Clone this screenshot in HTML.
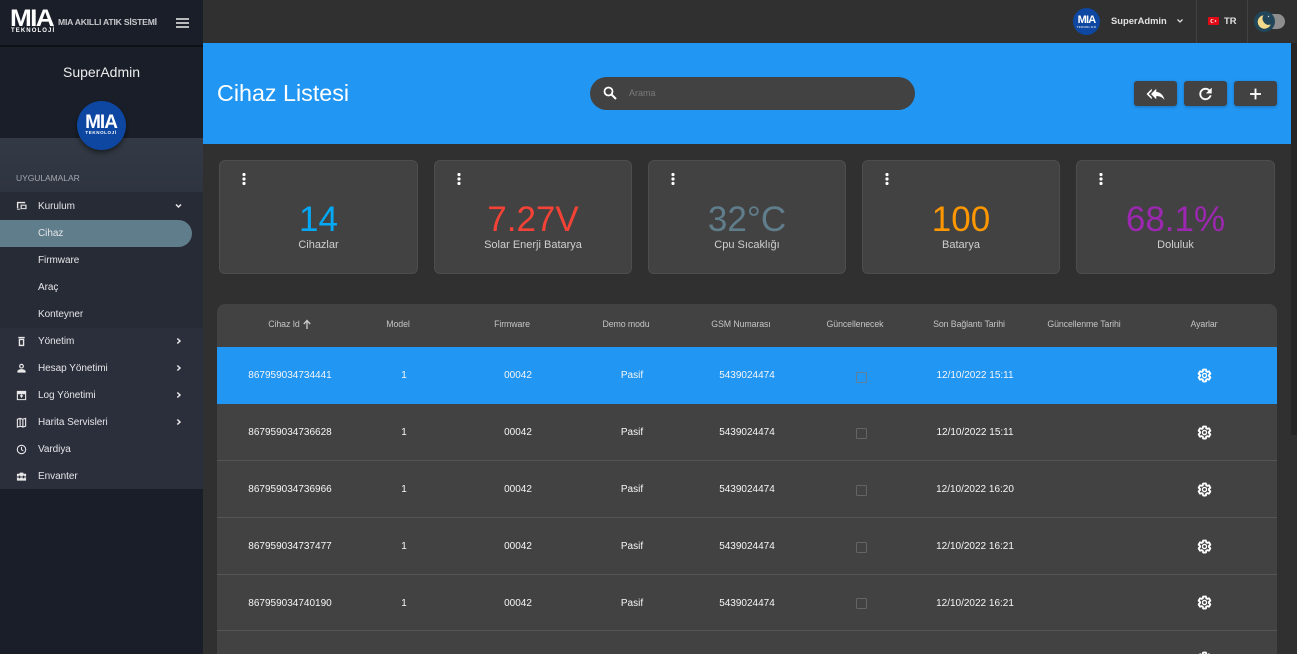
<!DOCTYPE html>
<html lang="tr"><head><meta charset="utf-8"><title>Cihaz Listesi</title>
<style>
*{box-sizing:border-box}
html,body{margin:0;padding:0;width:1297px;height:654px;overflow:hidden;background:#303030;font-family:"Liberation Sans",sans-serif;color:#fff}
#root{position:relative;width:1297px;height:654px;overflow:hidden}
.a{position:absolute;white-space:nowrap}
.c{transform:translateX(-50%)}
#side{position:absolute;left:0;top:0;width:203px;height:654px;background:#191e28;overflow:hidden}
#mid{position:absolute;left:0;top:138px;width:203px;height:351px;background:linear-gradient(#333a45,#2b2f3b 30%,#2b2e3b)}
.m{position:absolute;left:38px;font-size:10px;color:#e4e5e8;letter-spacing:-.05px;line-height:14px}
.ic{position:absolute;left:16px;width:11px;height:11px}
.ch{position:absolute;left:175px;width:7px;height:8px}
.card{position:absolute;top:160px;width:199px;height:114px;background:#424242;border:1px solid #4d4d4d;border-radius:6px}
.dots{position:absolute;left:22px;top:12px;width:4px;height:12px}
.num{position:absolute;left:0;right:0;top:41px;text-align:center;font-size:35px;line-height:36px;font-weight:400}
.lbl{position:absolute;left:0;right:0;top:77px;text-align:center;font-size:11px;color:#cfcfcf;line-height:14px}
.btn{position:absolute;top:81px;width:43px;height:25px;background:#424242;border-radius:3px;box-shadow:0 1px 3px rgba(0,0,0,.25)}
.btn svg{position:absolute;left:12px;top:3.5px;width:19px;height:18px}
.th{position:absolute;top:318px;font-size:8.8px;color:#c4c4c4;transform:translateX(-50%);white-space:nowrap;line-height:12px;letter-spacing:-.1px}
.td{position:absolute;font-size:10px;color:#f6f6f6;transform:translateX(-50%);white-space:nowrap;line-height:14px}
.cb{position:absolute;left:856px;width:11px;height:11px;border:1.5px solid #646464;border-radius:1.5px}
.gear{position:absolute;left:1196.5px;width:15px;height:15px}
.line{position:absolute;left:217px;width:1060px;height:1px;background:#555}
</style></head><body>
<div id="root">
<svg width="0" height="0" style="position:absolute"><defs>
<symbol id="g" viewBox="0 0 24 24"><path d="M19.14 12.94c.04-.3.06-.61.06-.94 0-.32-.02-.64-.07-.94l2.03-1.58a.49.49 0 0 0 .12-.61l-1.92-3.32a.488.488 0 0 0-.59-.22l-2.39.96c-.5-.38-1.03-.7-1.62-.94l-.36-2.54a.484.484 0 0 0-.48-.41h-3.84c-.24 0-.43.17-.47.41l-.36 2.54c-.59.24-1.13.57-1.62.94l-2.39-.96c-.22-.08-.47 0-.59.22L2.74 8.87c-.12.21-.08.47.12.61l2.03 1.58c-.05.3-.09.63-.09.94s.02.64.07.94l-2.03 1.58a.49.49 0 0 0-.12.61l1.92 3.32c.12.22.37.29.59.22l2.39-.96c.5.38 1.03.7 1.62.94l.36 2.54c.05.24.24.41.48.41h3.84c.24 0 .44-.17.47-.41l.36-2.54c.59-.24 1.13-.56 1.62-.94l2.39.96c.22.08.47 0 .59-.22l1.92-3.32c.12-.22.07-.47-.12-.61l-2.01-1.58z" fill="none" stroke="#fff" stroke-width="3" stroke-linejoin="round"/><circle cx="12" cy="12" r="3.300" fill="none" stroke="#fff" stroke-width="2.200"/></symbol>
</defs></svg>

<div id="side">
  <div style="position:absolute;left:0;top:45px;width:203px;height:2px;background:#0d1016"></div>
  <div class="a" style="left:10px;top:6px;font-size:24px;font-weight:700;letter-spacing:-1.5px;line-height:26px;transform:scaleX(1.09);transform-origin:left">MIA</div>
  <div class="a" style="left:11px;top:28px;font-size:6px;font-weight:700;letter-spacing:1.1px;line-height:7px">TEKNOLOJİ</div>
  <div class="a" style="left:58px;top:16px;font-size:8.6px;font-weight:700;color:#c8c9cc;letter-spacing:-.2px;line-height:12px">MIA AKILLI ATIK SİSTEMİ</div>
  <div style="position:absolute;left:176px;top:18px;width:13px;height:2px;background:#b9babc;box-shadow:0 4px 0 #b9babc,0 8px 0 #b9babc"></div>
  <div class="a c" style="left:101.500px;top:64px;font-size:14px;color:#eceded;line-height:17px">SuperAdmin</div>
  <div id="mid"></div>
  <div style="position:absolute;left:77px;top:101px;width:49px;height:49px;border-radius:50%;background:#0d47a1;box-shadow:0 3px 5px rgba(0,0,0,.45)"></div>
  <div class="a c" style="left:101px;top:113.500px;font-size:19px;font-weight:700;letter-spacing:-1px;line-height:17px">MIA</div>
  <div class="a c" style="left:101px;top:130px;font-size:4.500px;font-weight:700;letter-spacing:.6px;line-height:5px">TEKNOLOJİ</div>

  <div class="a" style="left:16px;top:172px;font-size:8.500px;color:#a3a7ae;line-height:12px;letter-spacing:-.05px">UYGULAMALAR</div>
  <div style="position:absolute;left:0;top:192px;width:203px;height:136px;background:#272b36"></div>
  <div style="position:absolute;left:0;top:220px;width:192px;height:27px;background:#607d8b;border-radius:0 14px 14px 0"></div>

  <svg class="ic" style="top:200px" viewBox="0 0 12 12"><path d="M1 2h9v1.500H2.500V9H1zM5 5h6.500v5H5z M1 9.500h3.500v1H1z" fill="#e8e8e8"/><rect x="6.300" y="6.200" width="3.900" height="2.700" fill="#2b303b"/></svg>
  <div class="m" style="top:200px">Kurulum</div>
  <svg class="ch" style="top:202px" viewBox="0 0 7 8"><path d="M1 2.500l2.500 2.500L6 2.500" fill="none" stroke="#e8e8e8" stroke-width="1.500"/></svg>
  <div class="m" style="top:227px">Cihaz</div>
  <div class="m" style="top:254px">Firmware</div>
  <div class="m" style="top:281px">Araç</div>
  <div class="m" style="top:308px">Konteyner</div>

  <svg class="ic" style="top:336px" viewBox="0 0 12 12"><path d="M2.500 1h7v1.500h-7zM3 3h6v8H3z" fill="#e8e8e8"/><rect x="4.500" y="4.500" width="3" height="5" fill="#2b2e3b"/></svg>
  <div class="m" style="top:335px">Yönetim</div>
  <svg class="ch" style="top:337px" viewBox="0 0 7 8"><path d="M2.300 1.500L5 4 2.300 6.500" fill="none" stroke="#e8e8e8" stroke-width="1.500"/></svg>

  <svg class="ic" style="top:363px" viewBox="0 0 12 12"><circle cx="6" cy="3.500" r="2" fill="none" stroke="#e8e8e8" stroke-width="1.300"/><path d="M1.500 10.500V9c0-1.500 3-2.300 4.500-2.300s4.500.8 4.500 2.300v1.500z" fill="#e8e8e8"/></svg>
  <div class="m" style="top:362px">Hesap Yönetimi</div>
  <svg class="ch" style="top:364px" viewBox="0 0 7 8"><path d="M2.300 1.500L5 4 2.300 6.500" fill="none" stroke="#e8e8e8" stroke-width="1.500"/></svg>

  <svg class="ic" style="top:390px" viewBox="0 0 12 12"><path d="M1.500 1.500h9v9h-9zM1.500 4h9M6 5.500v3M4.500 7L6 5.500 7.500 7" fill="none" stroke="#e8e8e8" stroke-width="1.200"/><rect x="1.500" y="1.500" width="9" height="2.500" fill="#e8e8e8"/></svg>
  <div class="m" style="top:389px">Log Yönetimi</div>
  <svg class="ch" style="top:391px" viewBox="0 0 7 8"><path d="M2.300 1.500L5 4 2.300 6.500" fill="none" stroke="#e8e8e8" stroke-width="1.500"/></svg>

  <svg class="ic" style="top:417px" viewBox="0 0 12 12"><path d="M1.500 2.500l3-1 3 1 3-1v8.500l-3 1-3-1-3 1zM4.500 1.500V10M7.500 2.500V11" fill="none" stroke="#e8e8e8" stroke-width="1.200"/></svg>
  <div class="m" style="top:416px">Harita Servisleri</div>
  <svg class="ch" style="top:418px" viewBox="0 0 7 8"><path d="M2.300 1.500L5 4 2.300 6.500" fill="none" stroke="#e8e8e8" stroke-width="1.500"/></svg>

  <svg class="ic" style="top:444px" viewBox="0 0 12 12"><circle cx="6" cy="6" r="4.600" fill="none" stroke="#e8e8e8" stroke-width="1.200"/><path d="M6 3.200V6.200L8 7.500" fill="none" stroke="#e8e8e8" stroke-width="1.100"/></svg>
  <div class="m" style="top:443px">Vardiya</div>

  <svg class="ic" style="top:471px" viewBox="0 0 12 12"><path d="M4 3V1.800h4V3h3v7.500H1V3z" fill="#e8e8e8"/><rect x="1" y="6" width="10" height="1" fill="#2b2e3b"/><rect x="3" y="5" width="1.500" height="3" fill="#2b2e3b"/><rect x="7.500" y="5" width="1.500" height="3" fill="#2b2e3b"/></svg>
  <div class="m" style="top:470px">Envanter</div>
</div>

<!-- top bar -->
<div style="position:absolute;left:203px;top:0;width:1094px;height:43px;background:#303030"></div>
<div style="position:absolute;left:1196px;top:0;width:1px;height:43px;background:#414141"></div>
<div style="position:absolute;left:1247px;top:0;width:1px;height:43px;background:#414141"></div>
<div style="position:absolute;left:1073px;top:8px;width:27px;height:27px;border-radius:50%;background:#0d47a1"></div>
<div class="a c" style="left:1086.500px;top:15px;font-size:11px;font-weight:700;letter-spacing:-.8px;line-height:11px">MIA</div>
<div class="a c" style="left:1086.500px;top:25px;font-size:3px;font-weight:700;letter-spacing:.3px;line-height:4px;color:#cfd8e6">TEKNOLOJİ</div>
<div class="a" style="left:1111px;top:14px;font-size:9.400px;font-weight:700;color:#e2e2e2;line-height:13px">SuperAdmin</div>
<svg class="a" style="left:1176px;top:17px;width:8px;height:8px" viewBox="0 0 8 8"><path d="M1.500 2.500L4 5l2.500-2.500" fill="none" stroke="#ddd" stroke-width="1.300"/></svg>
<svg class="a" style="left:1208px;top:17px;width:11px;height:8px" viewBox="0 0 11 8"><rect width="11" height="8" rx="1" fill="#e30a17"/><circle cx="4.500" cy="4" r="2" fill="#fff"/><circle cx="5" cy="4" r="1.600" fill="#e30a17"/><circle cx="7.500" cy="4" r=".8" fill="#fff"/></svg>
<div class="a" style="left:1224px;top:14px;font-size:9.400px;font-weight:700;color:#e2e2e2;line-height:13px">TR</div>
<div style="position:absolute;left:1262px;top:14px;width:23px;height:15px;border-radius:8px;background:#8e8e8e"></div>
<div style="position:absolute;left:1254px;top:11px;width:21px;height:21px;border-radius:50%;background:#21465a"></div>
<svg class="a" style="left:1254px;top:11px;width:21px;height:21px" viewBox="0 0 21 21"><path d="M9.500 4.200a6.800 6.800 0 1 0 7.300 9.300a6.300 6.300 0 0 1-7.300-9.300z" fill="#f3d98b"/><circle cx="14.500" cy="5.500" r=".7" fill="#cfd8dc"/></svg>

<!-- blue band -->
<div style="position:absolute;left:203px;top:43px;width:1088px;height:101px;background:#2196f3"></div>
<div class="a" style="left:217px;top:78px;font-size:23.300px;color:#fff;line-height:30px">Cihaz Listesi</div>
<div style="position:absolute;left:590px;top:77px;width:325px;height:33px;border-radius:17px;background:#424242"></div>
<svg class="a" style="left:602px;top:85px;width:16px;height:16px" viewBox="0 0 16 16"><circle cx="6.500" cy="6.500" r="4" fill="none" stroke="#fff" stroke-width="1.800"/><path d="M9.500 9.500L14 14" stroke="#fff" stroke-width="2"/></svg>
<div class="a" style="left:629px;top:87px;font-size:9px;color:#7b7b7b;line-height:12px">Arama</div>

<div class="btn" style="left:1134px"><svg viewBox="0 0 24 24"><path d="M7 8V5l-7 7 7 7v-3l-4-4zM13 9V5l-7 7 7 7v-4.100c5 0 8.500 1.600 11 5.100-1-5-4-10-11-11z" fill="#fff"/></svg></div>
<div class="btn" style="left:1184px"><svg viewBox="0 0 24 24"><path d="M17.650 6.350A8 8 0 1 0 19.730 14h-2.080A6 6 0 1 1 12 6c1.660 0 3.140.69 4.220 1.780L13 11h7V4z" fill="#fff" stroke="#fff" stroke-width=".5"/></svg></div>
<div class="btn" style="left:1234px"><svg viewBox="0 0 24 24"><path d="M19 13h-6v6h-2v-6H5v-2h6V5h2v6h6z" fill="#fff" stroke="#fff" stroke-width=".5"/></svg></div>

<!-- cards -->
<div class="card" style="left:219px"><svg class="dots" viewBox="0 0 4 12"><circle cx="2" cy="1.500" r="1.600" fill="#fff"/><circle cx="2" cy="6" r="1.600" fill="#fff"/><circle cx="2" cy="10.500" r="1.600" fill="#fff"/></svg><div class="num" style="color:#03a9f4">14</div><div class="lbl">Cihazlar</div></div>
<div class="card" style="left:434px;width:198px"><svg class="dots" viewBox="0 0 4 12"><circle cx="2" cy="1.500" r="1.600" fill="#fff"/><circle cx="2" cy="6" r="1.600" fill="#fff"/><circle cx="2" cy="10.500" r="1.600" fill="#fff"/></svg><div class="num" style="color:#f44336">7.27V</div><div class="lbl">Solar Enerji Batarya</div></div>
<div class="card" style="left:648px;width:198px"><svg class="dots" viewBox="0 0 4 12"><circle cx="2" cy="1.500" r="1.600" fill="#fff"/><circle cx="2" cy="6" r="1.600" fill="#fff"/><circle cx="2" cy="10.500" r="1.600" fill="#fff"/></svg><div class="num" style="color:#607d8b">32°C</div><div class="lbl">Cpu Sıcaklığı</div></div>
<div class="card" style="left:862px;width:198px"><svg class="dots" viewBox="0 0 4 12"><circle cx="2" cy="1.500" r="1.600" fill="#fff"/><circle cx="2" cy="6" r="1.600" fill="#fff"/><circle cx="2" cy="10.500" r="1.600" fill="#fff"/></svg><div class="num" style="color:#ff9800">100</div><div class="lbl">Batarya</div></div>
<div class="card" style="left:1076px;width:199px"><svg class="dots" viewBox="0 0 4 12"><circle cx="2" cy="1.500" r="1.600" fill="#fff"/><circle cx="2" cy="6" r="1.600" fill="#fff"/><circle cx="2" cy="10.500" r="1.600" fill="#fff"/></svg><div class="num" style="color:#9c27b0">68.1%</div><div class="lbl">Doluluk</div></div>

<!-- table -->
<div style="position:absolute;left:217px;top:304px;width:1060px;height:350px;background:#424242;border-radius:8px 8px 0 0"></div>
<div style="position:absolute;left:217px;top:347px;width:1060px;height:57px;background:#2196f3"></div>
<div class="line" style="top:460px"></div><div class="line" style="top:517px"></div><div class="line" style="top:574px"></div><div class="line" style="top:630px"></div>

<div class="th" style="left:284px">Cihaz Id</div>
<svg class="a" style="left:302px;top:319px;width:10px;height:11px" viewBox="0 0 10 11"><path d="M5 10V2M1.800 5L5 1.500 8.200 5" fill="none" stroke="#ccc" stroke-width="1.300"/></svg>
<div class="th" style="left:398px">Model</div>
<div class="th" style="left:512px">Firmware</div>
<div class="th" style="left:626px">Demo modu</div>
<div class="th" style="left:741px">GSM Numarası</div>
<div class="th" style="left:855px">Güncellenecek</div>
<div class="th" style="left:969px">Son Bağlantı Tarihi</div>
<div class="th" style="left:1084px">Güncellenme Tarihi</div>
<div class="th" style="left:1204px">Ayarlar</div>

<div class="td" style="left:290px;top:369px">867959034734441</div><div class="td" style="left:404px;top:369px">1</div><div class="td" style="left:518px;top:369px">00042</div><div class="td" style="left:632px;top:369px">Pasif</div><div class="td" style="left:747px;top:369px">5439024474</div><div class="cb" style="top:372px;border-color:#5f7f99"></div><div class="td" style="left:975px;top:369px">12/10/2022 15:11</div>
<svg class="gear" style="top:368px"><use href="#g"/></svg>

<div class="td" style="left:290px;top:426px">867959034736628</div><div class="td" style="left:404px;top:426px">1</div><div class="td" style="left:518px;top:426px">00042</div><div class="td" style="left:632px;top:426px">Pasif</div><div class="td" style="left:747px;top:426px">5439024474</div><div class="cb" style="top:428px"></div><div class="td" style="left:975px;top:426px">12/10/2022 15:11</div>
<svg class="gear" style="top:425px"><use href="#g"/></svg>

<div class="td" style="left:290px;top:483px">867959034736966</div><div class="td" style="left:404px;top:483px">1</div><div class="td" style="left:518px;top:483px">00042</div><div class="td" style="left:632px;top:483px">Pasif</div><div class="td" style="left:747px;top:483px">5439024474</div><div class="cb" style="top:485px"></div><div class="td" style="left:975px;top:483px">12/10/2022 16:20</div>
<svg class="gear" style="top:482px"><use href="#g"/></svg>

<div class="td" style="left:290px;top:540px">867959034737477</div><div class="td" style="left:404px;top:540px">1</div><div class="td" style="left:518px;top:540px">00042</div><div class="td" style="left:632px;top:540px">Pasif</div><div class="td" style="left:747px;top:540px">5439024474</div><div class="cb" style="top:542px"></div><div class="td" style="left:975px;top:540px">12/10/2022 16:21</div>
<svg class="gear" style="top:539px"><use href="#g"/></svg>

<div class="td" style="left:290px;top:597px">867959034740190</div><div class="td" style="left:404px;top:597px">1</div><div class="td" style="left:518px;top:597px">00042</div><div class="td" style="left:632px;top:597px">Pasif</div><div class="td" style="left:747px;top:597px">5439024474</div><div class="cb" style="top:598px"></div><div class="td" style="left:975px;top:597px">12/10/2022 16:21</div>
<svg class="gear" style="top:595px"><use href="#g"/></svg>
<svg class="gear" style="top:651px"><use href="#g"/></svg>

<!-- scrollbar -->
<div style="position:absolute;left:1291px;top:43px;width:6px;height:392px;background:#262626"></div>
</div>
</body></html>
